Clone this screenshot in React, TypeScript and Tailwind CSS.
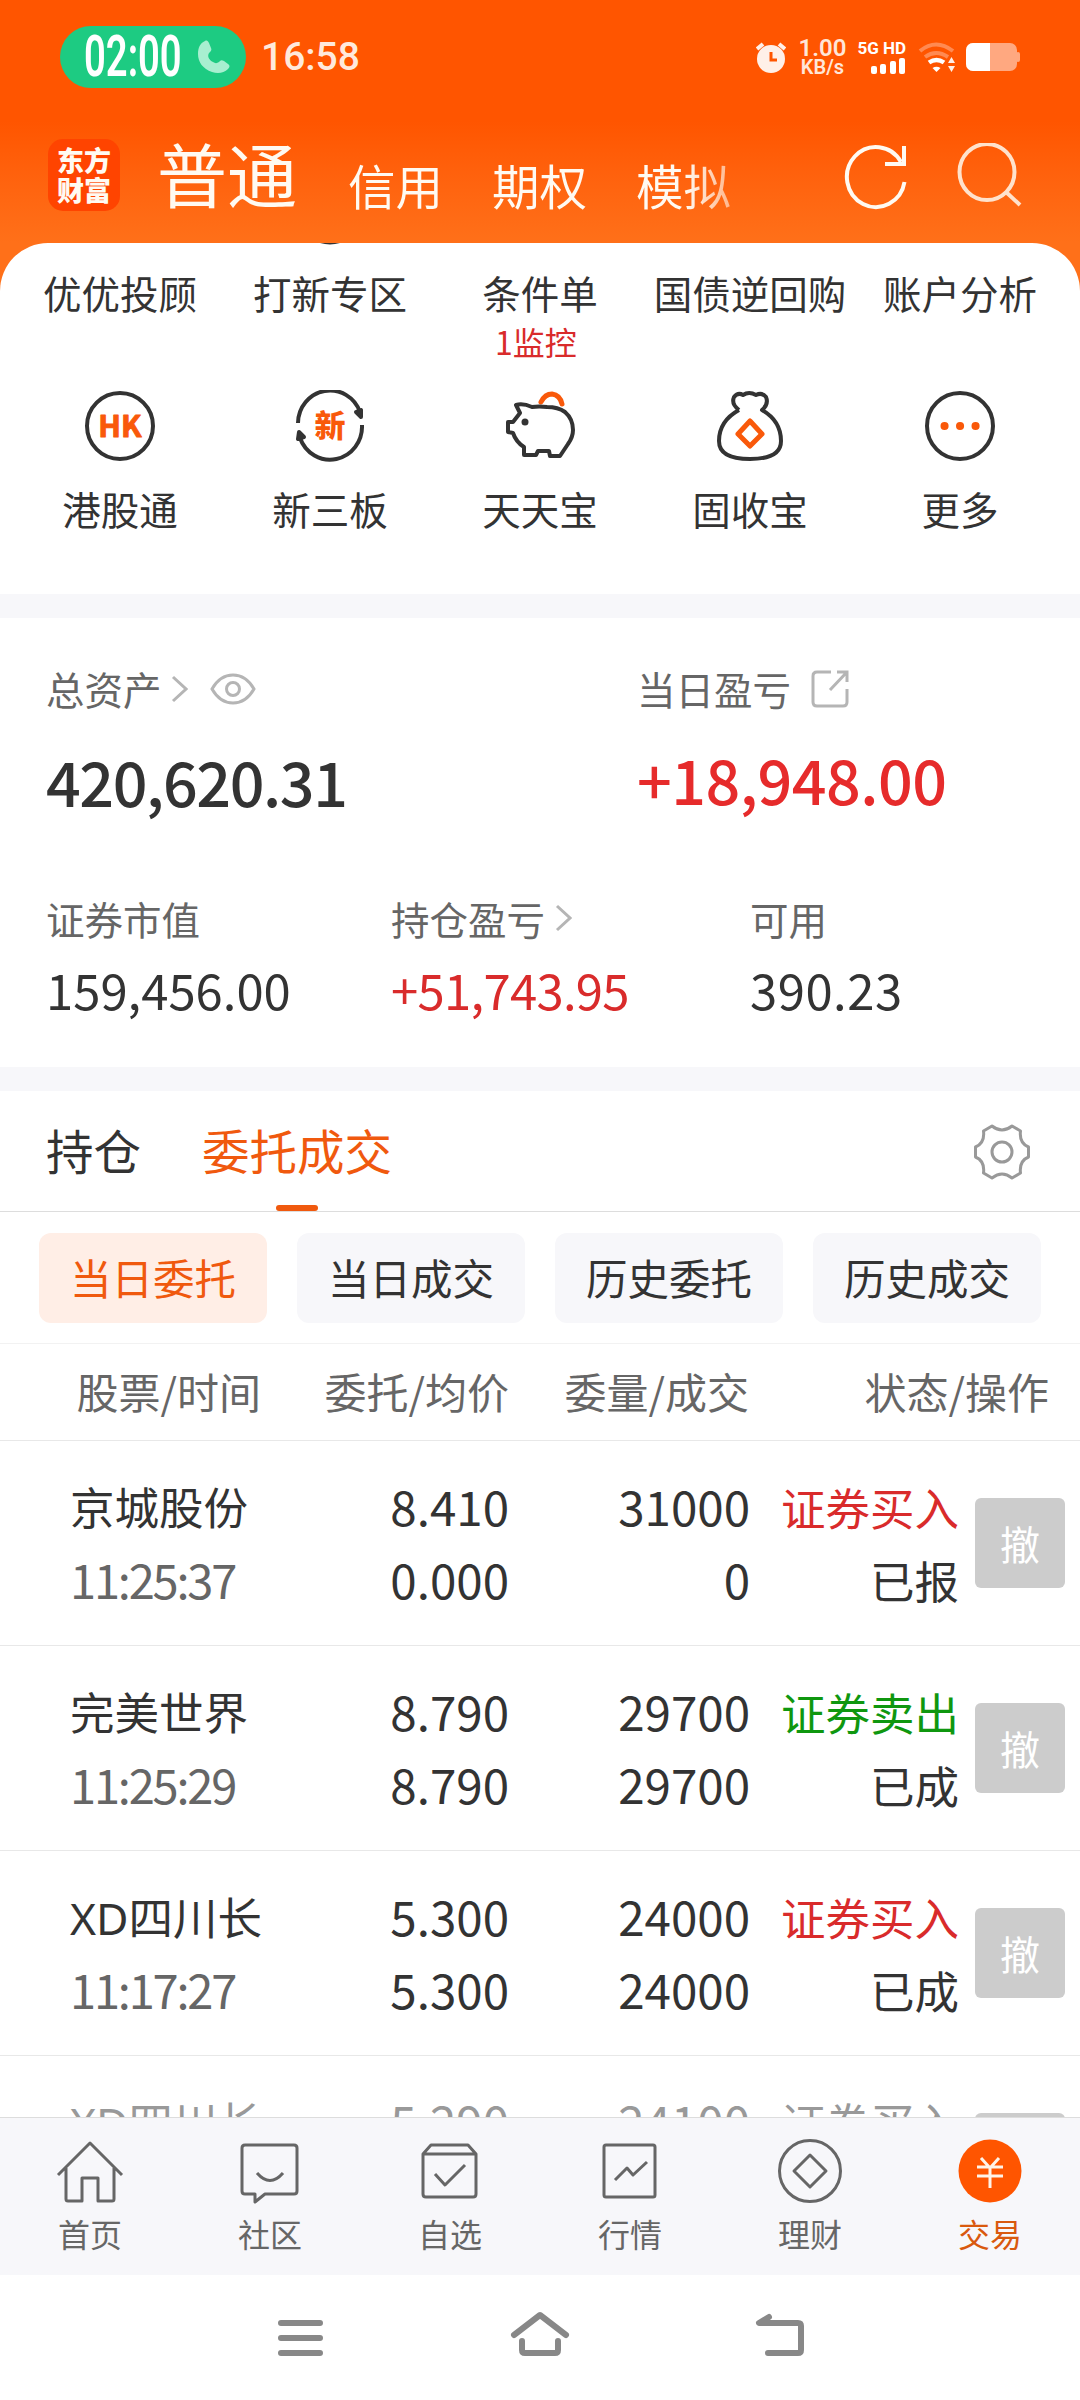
import type { ReactNode } from "react";

const shortcuts = ["优优投顾", "打新专区", "条件单", "国债逆回购", "账户分析"];

const modes = ["信用", "期权", "模拟"];

const filters = ["当日委托", "当日成交", "历史委托", "历史成交"];

const orders = [
  { name: "京城股份", time: "11:25:37", price: "8.410", avg: "0.000", qty: "31000", filled: "0", side: "证券买入", status: "已报" },
  { name: "完美世界", time: "11:25:29", price: "8.790", avg: "8.790", qty: "29700", filled: "29700", side: "证券卖出", status: "已成" },
  { name: "XD四川长", time: "11:17:27", price: "5.300", avg: "5.300", qty: "24000", filled: "24000", side: "证券买入", status: "已成" },
  { name: "XD四川长", time: "11:17:20", price: "5.290", avg: "5.290", qty: "24100", filled: "24100", side: "证券买入", status: "已成", faded: true },
];

function StatusBar() {
  return (
    <div className="flex h-[114px] items-center pl-[60px] pr-[60px] text-white">
      <div className="flex h-[62px] w-[186px] items-center rounded-full bg-[#1dcb82]">
        <span className="ml-[24px] w-[104px] origin-left scale-x-[0.67] whitespace-nowrap font-['Roboto'] text-[57px] font-semibold leading-[62px]">
          02:00
        </span>
        <svg className="ml-[10px]" width="32" height="35" viewBox="0 0 32 35" fill="#a8efd0">
          <path d="M7 1c2-1 3 0 4 2l2 5c1 2 0 3-2 5-2 3 0 7 4 9 2 1.500 4 1.500 6 0l1-1c1-1 2-1 4 0l4 3c2 1 2 3 0 5-4 4-10 5-16 3C5 29 0 22 0 14 0 8 2 3 7 1z" />
        </svg>
      </div>
      <span className="ml-[15px] font-['Roboto'] text-[39px] font-medium leading-none text-[#ffe9dc]">16:58</span>
      <div className="ml-auto flex items-center">
        <svg width="30" height="31" viewBox="0 0 30 31" fill="#fff0e8">
          <circle cx="15" cy="17" r="14" />
          <path d="M1 7l6-5M29 7l-6-5" stroke="#fff0e8" strokeWidth="4" />
          <path d="M15 10v8h6" fill="none" stroke="#ff5500" strokeWidth="3" />
        </svg>
        <div className="ml-[12px] flex w-[49px] flex-col items-center font-['Roboto'] font-semibold text-[#ffe6d8]">
          <span className="text-[24px] leading-[20px]">1.00</span>
          <span className="text-[20px] leading-[19px]">KB/s</span>
        </div>
        <div className="ml-[10px] flex w-[49px] flex-col items-end">
          <span className="whitespace-nowrap font-['Roboto'] text-[17px] font-bold leading-[17px]">5G HD</span>
          <svg width="36" height="18" viewBox="0 0 36 18" fill="#fff">
            <rect x="1" y="9" width="6" height="8" rx="2" />
            <rect x="10" y="7" width="6" height="10" rx="2" />
            <rect x="20" y="4" width="6" height="13" rx="2" />
            <rect x="29" y="1" width="6" height="16" rx="2" />
          </svg>
        </div>
        <svg className="ml-[12px]" width="38" height="31" viewBox="0 0 38 31" fill="none">
          <path d="M2 9q16-13 33 0" stroke="#ff8a52" strokeWidth="4" />
          <path d="M7 15q11-8 23 0" stroke="#ff8a52" strokeWidth="4" />
          <path d="M11 20.500q7.500-5 15 0" stroke="#fff" strokeWidth="4.500" />
          <path d="M14.500 26q4-2.500 8 0l-4 4z" fill="#fff" />
          <path d="M30 21l3.500-6 3.500 6zM30 24l3.500 6 3.500-6z" fill="#fff0e8" />
        </svg>
        <svg className="ml-[10px]" width="54" height="28" viewBox="0 0 54 28">
          <rect width="51" height="28" rx="7" fill="#ffa880" />
          <rect x="50" y="9" width="4" height="10" rx="2" fill="#ffa880" />
          <path d="M7 0h17v28H7a7 7 0 0 1-7-7V7a7 7 0 0 1 7-7z" fill="#fff" />
        </svg>
      </div>
    </div>
  );
}

function Header() {
  return (
    <div className="flex h-[129px] items-start pl-[48px] pr-[57px] text-[#fffaf2]">
      <div className="mt-[25px] flex h-[72px] w-[72px] flex-col items-center justify-center rounded-[15px] bg-[#ff4400] text-[27px] font-black leading-[30px]">
        <span>东方</span>
        <span>财富</span>
      </div>
      <span className="ml-[37px] mt-[19px] text-[70px] leading-[80px]">普通</span>
      <div className="ml-[51px] mt-[41px] flex gap-[49px] bg-linear-to-r from-[#fffaf2] from-88% to-[#ffb58a] bg-clip-text text-[47.500px] leading-[60px] text-transparent">
        {modes.map((m) => (
          <span key={m}>{m}</span>
        ))}
      </div>
      <svg className="ml-auto mt-[28px]" width="66" height="68" viewBox="0 0 66 68" fill="none" stroke="currentColor" strokeWidth="4">
        <path d="M61.500 40A29 30 0 1 1 58 20" />
        <path d="M61 4v18H42" />
      </svg>
      <svg className="ml-[48px] mt-[29px]" width="66" height="68" viewBox="0 0 66 68" fill="none" stroke="#ffe2cc" strokeWidth="4">
        <ellipse cx="30" cy="29" rx="27.500" ry="28" />
        <path d="M49 49l14 13" />
      </svg>
    </div>
  );
}

function Feature({ label, children }: { label: string; children: ReactNode }) {
  return (
    <div className="flex flex-col items-center">
      <svg width="72" height="72" viewBox="0 0 72 72" fill="none" stroke="#333" strokeWidth="4" strokeLinejoin="round">
        {children}
      </svg>
      <span className="mt-[20px] whitespace-nowrap leading-[52px]">{label}</span>
    </div>
  );
}

function Shortcuts() {
  return (
    <div className="h-[351px] overflow-hidden rounded-t-[48px] bg-white px-[15px] text-[38.500px] text-[#333]">
      {/* bottom edge of the scrolled icon row */}
      <div className="grid h-[23px] grid-cols-5">
        <svg className="col-start-2 mx-auto" width="24" height="2" viewBox="0 0 24 2">
          <circle cx="12" cy="-32" r="33.500" fill="#333" />
        </svg>
      </div>
      <div className="grid h-[122px] grid-cols-5">
        {shortcuts.map((s) => (
          <div key={s} className="flex flex-col items-center">
            <span className="whitespace-nowrap leading-[52px]">{s}</span>
            {s === "条件单" && <span className="mr-[8px] mt-[1px] text-[32px] leading-[44px] text-[#d92b2b]">1监控</span>}
          </div>
        ))}
      </div>
      <div className="mt-[2px] grid grid-cols-5">
        <Feature label="港股通">
          <circle cx="36" cy="36" r="33" />
          <text x="36" y="47" textAnchor="middle" fontSize="30" fontWeight="700" fill="#f9590a" stroke="#f9590a" strokeWidth="1">HK</text>
        </Feature>
        <Feature label="新三板">
          <path d="M4 33A32 33 0 0 1 66 22M68 35A32 33 0 0 1 6 48" />
          <path d="M62 22l5-2 0 7zM4 49l1-7 5 5z" fill="#333" />
          <text x="36" y="47" textAnchor="middle" fontSize="31" fontWeight="900" fill="#f9590a" stroke="none">新</text>
        </Feature>
        <Feature label="天天宝">
          <path d="M37 12q4-8 11-8 8 1 10 10" stroke="#f9590a" strokeWidth="5" strokeLinecap="round" />
          <path d="M12 15q7-2 16 2 7-1 15 0 11 0 18 5 8 7 8 18 0 7-5 14l-8 12H46l-1-5H34l-2 4H20v-8Q12 52 9 43l-5-1V32h5l7-9-4-8z" />
          <circle cx="21" cy="32" r="3.500" fill="#333" stroke="none" />
        </Feature>
        <Feature label="固收宝">
          <path d="M25 20q-8-6-5-13 4-5 9-2 6-4 13 0 6-3 10 2 3 7-4 13 19 11 19 31 0 18-31 18T5 51q0-20 20-31" />
          <path d="M36 31l12 13-12 12-12-12z" stroke="#f9590a" strokeWidth="5" />
        </Feature>
        <Feature label="更多">
          <circle cx="36" cy="36" r="33" />
          <path d="M20.500 36h.1M36 36h.1M51.500 36h.1" stroke="#f9590a" strokeWidth="8" strokeLinecap="round" />
        </Feature>
      </div>
    </div>
  );
}

function Chevron() {
  return (
    <svg width="18" height="28" viewBox="0 0 18 28" fill="none" stroke="#b5b5b5" strokeWidth="3">
      <path d="M3 2l13 12L3 26" />
    </svg>
  );
}

function Assets() {
  return (
    <div className="h-[449px] px-[46px] pt-[43px] text-[38.500px] text-[#666]">
      <div className="flex">
        <div className="w-[591px]">
          <div className="flex h-[56px] items-center">
            总资产
            <span className="ml-[8px]"><Chevron /></span>
            <svg className="ml-[22px]" width="46" height="32" viewBox="0 0 46 32" fill="none" stroke="#b5b5b5" strokeWidth="3">
              <path d="M2 16Q10 2 23 2t21 14Q36 30 23 30T2 16z" />
              <circle cx="23" cy="16" r="6.500" />
            </svg>
          </div>
          <p className="mt-[24px] text-[61px] font-medium leading-[80px] tracking-[-1.400px] text-[#333]">420,620.31</p>
        </div>
        <div>
          <div className="flex h-[56px] items-center">
            当日盈亏
            <svg className="ml-[20px]" width="38" height="38" viewBox="0 0 38 38" fill="none" stroke="#b5b5b5" strokeWidth="3">
              <path d="M20 2H6Q2 2 2 6v26q0 4 4 4h26q4 0 4-4V19M26 2h10v10M36 2L19 20" />
            </svg>
          </div>
          <p className="mt-[22px] text-[61px] font-medium leading-[80px] tracking-[-0.500px] text-[#e62b2b]">+18,948.00</p>
        </div>
      </div>
      <div className="mt-[69px] flex">
        <div className="w-[345px]">
          <p className="leading-[56px]">证券市值</p>
          <p className="mt-[11px] text-[49px] leading-[64px] text-[#333]">159,456.00</p>
        </div>
        <div className="w-[359px]">
          <p className="flex items-center leading-[56px]">
            持仓盈亏
            <span className="ml-[9px]"><Chevron /></span>
          </p>
          <p className="mt-[11px] text-[49px] leading-[64px] tracking-[-0.700px] text-[#d92b2b]">+51,743.95</p>
        </div>
        <div>
          <p className="leading-[56px]">可用</p>
          <p className="mt-[11px] text-[49px] leading-[64px] tracking-[0.500px] text-[#333]">390.23</p>
        </div>
      </div>
    </div>
  );
}

function Tabs() {
  return (
    <div className="flex h-[121px] items-stretch border-b border-[#ddd] pl-[46px] pr-[50px] text-[47.500px]">
      <span className="leading-[117px] text-[#333]">持仓</span>
      <div className="ml-[61px] flex flex-col items-center text-[#f0590e]">
        <span className="h-[114px] leading-[117px]">委托成交</span>
        <span className="h-[6px] w-[42px] rounded-full bg-[#f0590e]" />
      </div>
      <svg className="ml-auto mt-[33px]" width="56" height="56" viewBox="0 0 56 56" fill="none" stroke="#999" strokeWidth="3" strokeLinejoin="round">
        <path d="M18 2Q28 10 38 2L46.500 7Q45 19 54.500 23V33Q45 37 46.500 49L38 54Q28 46 18 54L9.500 49Q11 37 1.500 33V23Q11 19 9.500 7Z" />
        <circle cx="28" cy="28" r="10" />
      </svg>
    </div>
  );
}

function Filters() {
  return (
    <div className="flex h-[132px] gap-[30px] border-b border-[#f2f2f2] pl-[39px] pt-[21px] text-[41.500px]">
      {filters.map((f, i) => (
        <button
          key={f}
          className={`h-[90px] w-[228px] rounded-xl pb-[2px] ${i === 0 ? "bg-[#ffeee6] text-[#f0590e]" : "bg-[#f7f7fa] text-[#333]"}`}
        >
          {f}
        </button>
      ))}
    </div>
  );
}

function Orders() {
  return (
    <div className="h-[773px] overflow-hidden">
      <div className="flex h-[97px] items-center border-b border-[#e8e8e8] pb-[3px] text-right text-[42px] text-[#666]">
        <span className="w-[261px]">股票/时间</span>
        <span className="w-[248px]">委托/均价</span>
        <span className="w-[240px]">委量/成交</span>
        <span className="w-[300px]">状态/操作</span>
      </div>
      {orders.map((o, i) => (
        <div
          key={i}
          className={`flex h-[205px] border-b border-[#e8e8e8] pl-[70px] pt-[29px] text-right text-[47.500px] leading-[73px] ${o.faded ? "text-[#999]" : "text-[#333]"}`}
        >
          <div className="w-[200px] text-left">
            <p className="h-[72px] whitespace-nowrap pt-px font-['Noto_Sans','Noto_Sans_CJK_SC',sans-serif] text-[44.500px]">{o.name}</p>
            <p className="text-[47px] tracking-[-2.200px] text-[#666]">{o.time}</p>
          </div>
          <div className="-mt-px w-[239px]">
            <p>{o.price}</p>
            <p>{o.avg}</p>
          </div>
          <div className="-mt-px w-[241px]">
            <p>{o.qty}</p>
            <p>{o.filled}</p>
          </div>
          <div className="w-[209px] text-[44.500px]">
            <p className={o.faded ? "" : o.side === "证券买入" ? "text-[#d92b2b]" : "text-[#0f970f]"}>{o.side}</p>
            <p>{o.status}</p>
          </div>
          <button className="ml-[16px] mt-[28px] h-[90px] w-[90px] rounded-md bg-[#ccc] text-[40px] leading-[88px] text-white">撤</button>
        </div>
      ))}
    </div>
  );
}

function NavItem({ label, active, children }: { label: string; active?: boolean; children: ReactNode }) {
  return (
    <div className={`flex flex-1 flex-col items-center pt-[18px] ${active ? "text-[#d9590e]" : "text-[#666]"}`}>
      <svg width="70" height="70" viewBox="0 0 70 70" fill="none" stroke="#666" strokeWidth="3" strokeLinejoin="round">
        {children}
      </svg>
      <span className="mt-[6px] text-[32px] leading-[42px]">{label}</span>
    </div>
  );
}

function BottomNav() {
  return (
    <div className="flex h-[158px] border-t border-[#ddd] bg-[#f7f7fa]">
      <NavItem label="首页">
        <path d="M3 39L35 7l32 32M11 32v31q0 2 2 2h14V42h16v23h14q2 0 2-2V32" />
      </NavItem>
      <NavItem label="社区">
        <path d="M10 9h49q3 0 3 3v43q0 3-3 3H30l-10 8v-8H10q-3 0-3-3V12q0-3 3-3zM22 37q13 15 26 0" />
      </NavItem>
      <NavItem label="自选">
        <path d="M16 9h37l8 9v40q0 3-3 3H11q-3 0-3-3V18zM8 18h53M20 38l10 11 20-20" />
      </NavItem>
      <NavItem label="行情">
        <rect x="9" y="9" width="51" height="52" rx="2" />
        <path d="M20 44l12-12 6 7 14-13" />
      </NavItem>
      <NavItem label="理财">
        <circle cx="35" cy="35" r="30.500" />
        <path d="M35 19l16 16-16 16-16-16z" />
      </NavItem>
      <NavItem label="交易" active>
        <circle cx="35" cy="35" r="31.500" fill="#ff5500" stroke="none" />
        <path d="M26 22l9 10 9-10M22 31h26M22 40h26M35 31v21" stroke="#fff3e8" />
      </NavItem>
    </div>
  );
}

function SystemNav() {
  return (
    <div className="flex h-[126px] justify-center gap-[180px] pt-[33px] text-[#888]">
      <svg width="60" height="60" viewBox="0 0 60 60" fill="none" stroke="currentColor" strokeWidth="6" strokeLinecap="round">
        <path d="M11 15h39M11 30h39M11 45h39" />
      </svg>
      <svg width="60" height="60" viewBox="0 0 60 60" fill="none" stroke="currentColor" strokeWidth="6" strokeLinecap="round" strokeLinejoin="round">
        <path d="M4 27L30 7l26 20M12 33v9q0 3 3 3h30q3 0 3-3v-9" />
      </svg>
      <svg width="60" height="60" viewBox="0 0 60 60" fill="none" stroke="currentColor" strokeWidth="6" strokeLinecap="round" strokeLinejoin="round">
        <path d="M19 9L9 15h39q3 0 3 3v24q0 3-3 3H18" />
      </svg>
    </div>
  );
}

export default function App() {
  return (
    <div className="h-[2400px] w-[1080px] overflow-hidden bg-white font-['Noto_Sans_CJK_SC',sans-serif]">
      <div className="bg-linear-to-b from-[#ff5500] from-50% to-[#ff7019]">
        <StatusBar />
        <Header />
      </div>
      <div className="bg-[linear-gradient(#ff7019_0_60px,#fff_60px)]">
        <Shortcuts />
      </div>
      <div className="h-[24px] bg-[#f7f7fa]" />
      <Assets />
      <div className="h-[24px] bg-[#f7f7fa]" />
      <Tabs />
      <Filters />
      <Orders />
      <BottomNav />
      <SystemNav />
    </div>
  );
}
